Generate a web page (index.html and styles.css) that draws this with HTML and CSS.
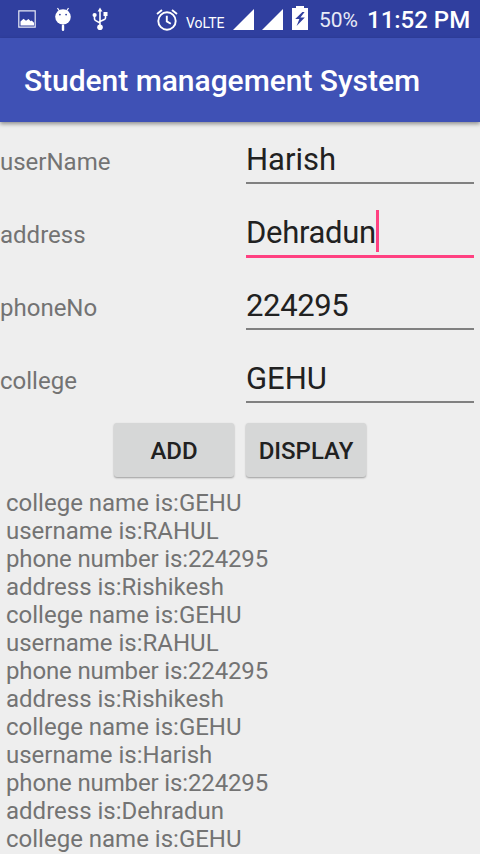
FILE: index.html
```html
<!DOCTYPE html>
<html lang="en">
<head>
<meta charset="utf-8">
<title>Student management System</title>
<link rel="stylesheet" href="styles.css">
</head>
<body>
<div class="screen">
  <div class="status">
    <svg class="icon picture" width="18" height="18" viewBox="0 0 18 18"><path fill="none" stroke="#e8eaf6" stroke-width="1.2" d="M.8.8h16.4v16.4H.8z"/><path fill="#fff" d="M2.5 15.5V11.5l3-2.7 2.5 2 2.5-1.8 2.2 2.2 1-.7 2.3 2.3v2.7z"/></svg>
    <svg class="icon droid" width="18" height="24" viewBox="0 0 18 24"><path stroke="#fff" stroke-width="1.2" d="M3.5 1l2.2 3.5M14.5 1l-2.2 3.5"/><ellipse cx="9" cy="9.8" rx="7.8" ry="7.6" fill="#fff"/><circle cx="5.9" cy="7.6" r=".9" fill="#303f9f"/><circle cx="12.1" cy="7.6" r=".9" fill="#303f9f"/><path stroke="#fff" stroke-width="2.4" stroke-linecap="round" d="M9 18.8v4"/></svg>
    <svg class="icon usb" width="16" height="24" viewBox="0 0 16 24"><path d="M8 3v16M2.5 8v4q0 1 1.2 1.6L8 16M13.5 7v4q0 1-1.2 1.6L8 14.5" fill="none" stroke="#fff" stroke-width="1.6"/><path d="M8 .5l2.4 4H5.6zM11.5 5h4v4h-4z" fill="#fff"/><circle cx="2.6" cy="8" r="2.1" fill="#fff"/><circle cx="8" cy="20.3" r="2.8" fill="#fff"/></svg>
    <svg class="icon alarm" width="22" height="22" viewBox="0 0 22 22"><g fill="none" stroke="#fff" stroke-width="1.9"><circle cx="11" cy="12" r="8.7"/><path d="M10.8 6.8v5.6l4 2.4M1 5l5-4M21 5l-5-4"/></g></svg>
    <span class="volte">VoLTE</span>
    <svg class="icon signal" width="21" height="21" viewBox="0 0 21 21"><path fill="#fff" d="M21 0v21H0z"/></svg>
    <svg class="icon signal second" width="21" height="21" viewBox="0 0 21 21"><path fill="#fff" d="M21 0v21H0z"/></svg>
    <svg class="icon battery" width="16" height="24" viewBox="0 0 16 24"><path fill="#fff" d="M0 2h4V0h8v2h4v22H0z"/><path fill="#303f9f" d="M10.4 6L3.2 13h4.2l-2.8 7 8.2-8.4H8.4L12.6 6z"/></svg>
    <span class="percent">50%</span>
    <span class="clock">11:52 PM</span>
  </div>
  <header class="appbar"><h1 class="title">Student management System</h1></header>
  <main>
    <div class="row"><label class="label">userName</label><div class="field">Harish</div></div>
    <div class="row"><label class="label">address</label><div class="field focused">Dehradun<span class="caret"></span></div></div>
    <div class="row"><label class="label">phoneNo</label><div class="field number">224295</div></div>
    <div class="row"><label class="label">college</label><div class="field">GEHU</div></div>
    <div class="actions"><button class="button">ADD</button><button class="button">DISPLAY</button></div>
    <div class="output">
      <div>college name is:GEHU</div>
      <div>username is:RAHUL</div>
      <div class="phone">phone number is:224295</div>
      <div>address is:Rishikesh</div>
      <div>college name is:GEHU</div>
      <div>username is:RAHUL</div>
      <div class="phone">phone number is:224295</div>
      <div>address is:Rishikesh</div>
      <div>college name is:GEHU</div>
      <div>username is:Harish</div>
      <div class="phone">phone number is:224295</div>
      <div>address is:Dehradun</div>
      <div>college name is:GEHU</div>
    </div>
  </main>
</div>
</body>
</html>
```
FILE: styles.css
```css
* { box-sizing: border-box; }
body { margin: 0; background: #eee; font-family: Roboto, sans-serif; }
.screen { width: 480px; height: 854px; overflow: hidden; background: #eee; }
.status { display: flex; height: 38px; background: #303f9f; color: #fff; white-space: nowrap; }
.icon { display: block; flex: none; }
.picture { margin: 10px 0 0 18px; }
.droid { margin: 7px 0 0 18px; }
.usb { margin: 7px 0 0 20px; }
.alarm { margin: 9px 0 0 48px; }
.volte { width: 42px; margin-left: 8px; font-size: 14px; line-height: 46px; }
.signal { margin: 9px 0 0 5px; }
.second { margin-left: 8px; }
.battery { margin: 6px 0 0 9px; }
.percent { width: 40px; margin-left: 11px; font-size: 21px; line-height: 40px; color: #e8eaf6; }
.clock { margin-left: 8px; font-size: 24px; font-weight: 500; line-height: 40px; }
.appbar { position: relative; height: 84px; padding-left: 24px; background: #3f51b5; box-shadow: 0 2px 4px rgba(0, 0, 0, .4); }
.title { margin: 0; color: #fff; font-size: 30px; font-weight: 500; line-height: 85px; letter-spacing: -.04px; white-space: nowrap; }
.row { display: flex; align-items: flex-start; height: 73px; }
.label { width: 246px; padding-top: 26px; color: #737373; font-size: 24px; line-height: 28px; }
.field { width: 228px; height: 62px; padding-top: 17px; border-bottom: 2px solid #808080; color: #212121; font-size: 31px; line-height: 42px; white-space: nowrap; }
.focused { height: 63px; padding-top: 15px; border-bottom: 3px solid #ff4081; line-height: 45px; letter-spacing: -.3px; }
.number { letter-spacing: -.35px; }
.caret { display: inline-block; width: 3px; height: 42px; background: #ff4081; vertical-align: top; }
.actions { display: flex; justify-content: center; gap: 12px; height: 75px; padding-top: 9px; }
.button { width: 120px; height: 54px; padding: 0; border: 0; border-radius: 3px; background: #d6d7d7; box-shadow: 0 1px 2px rgba(0, 0, 0, .35); color: #212121; font: 500 24px/56px Roboto, sans-serif; }
.output { padding-left: 6px; color: #737373; font-size: 24px; line-height: 28px; }
.phone { letter-spacing: -.14px; }
```
